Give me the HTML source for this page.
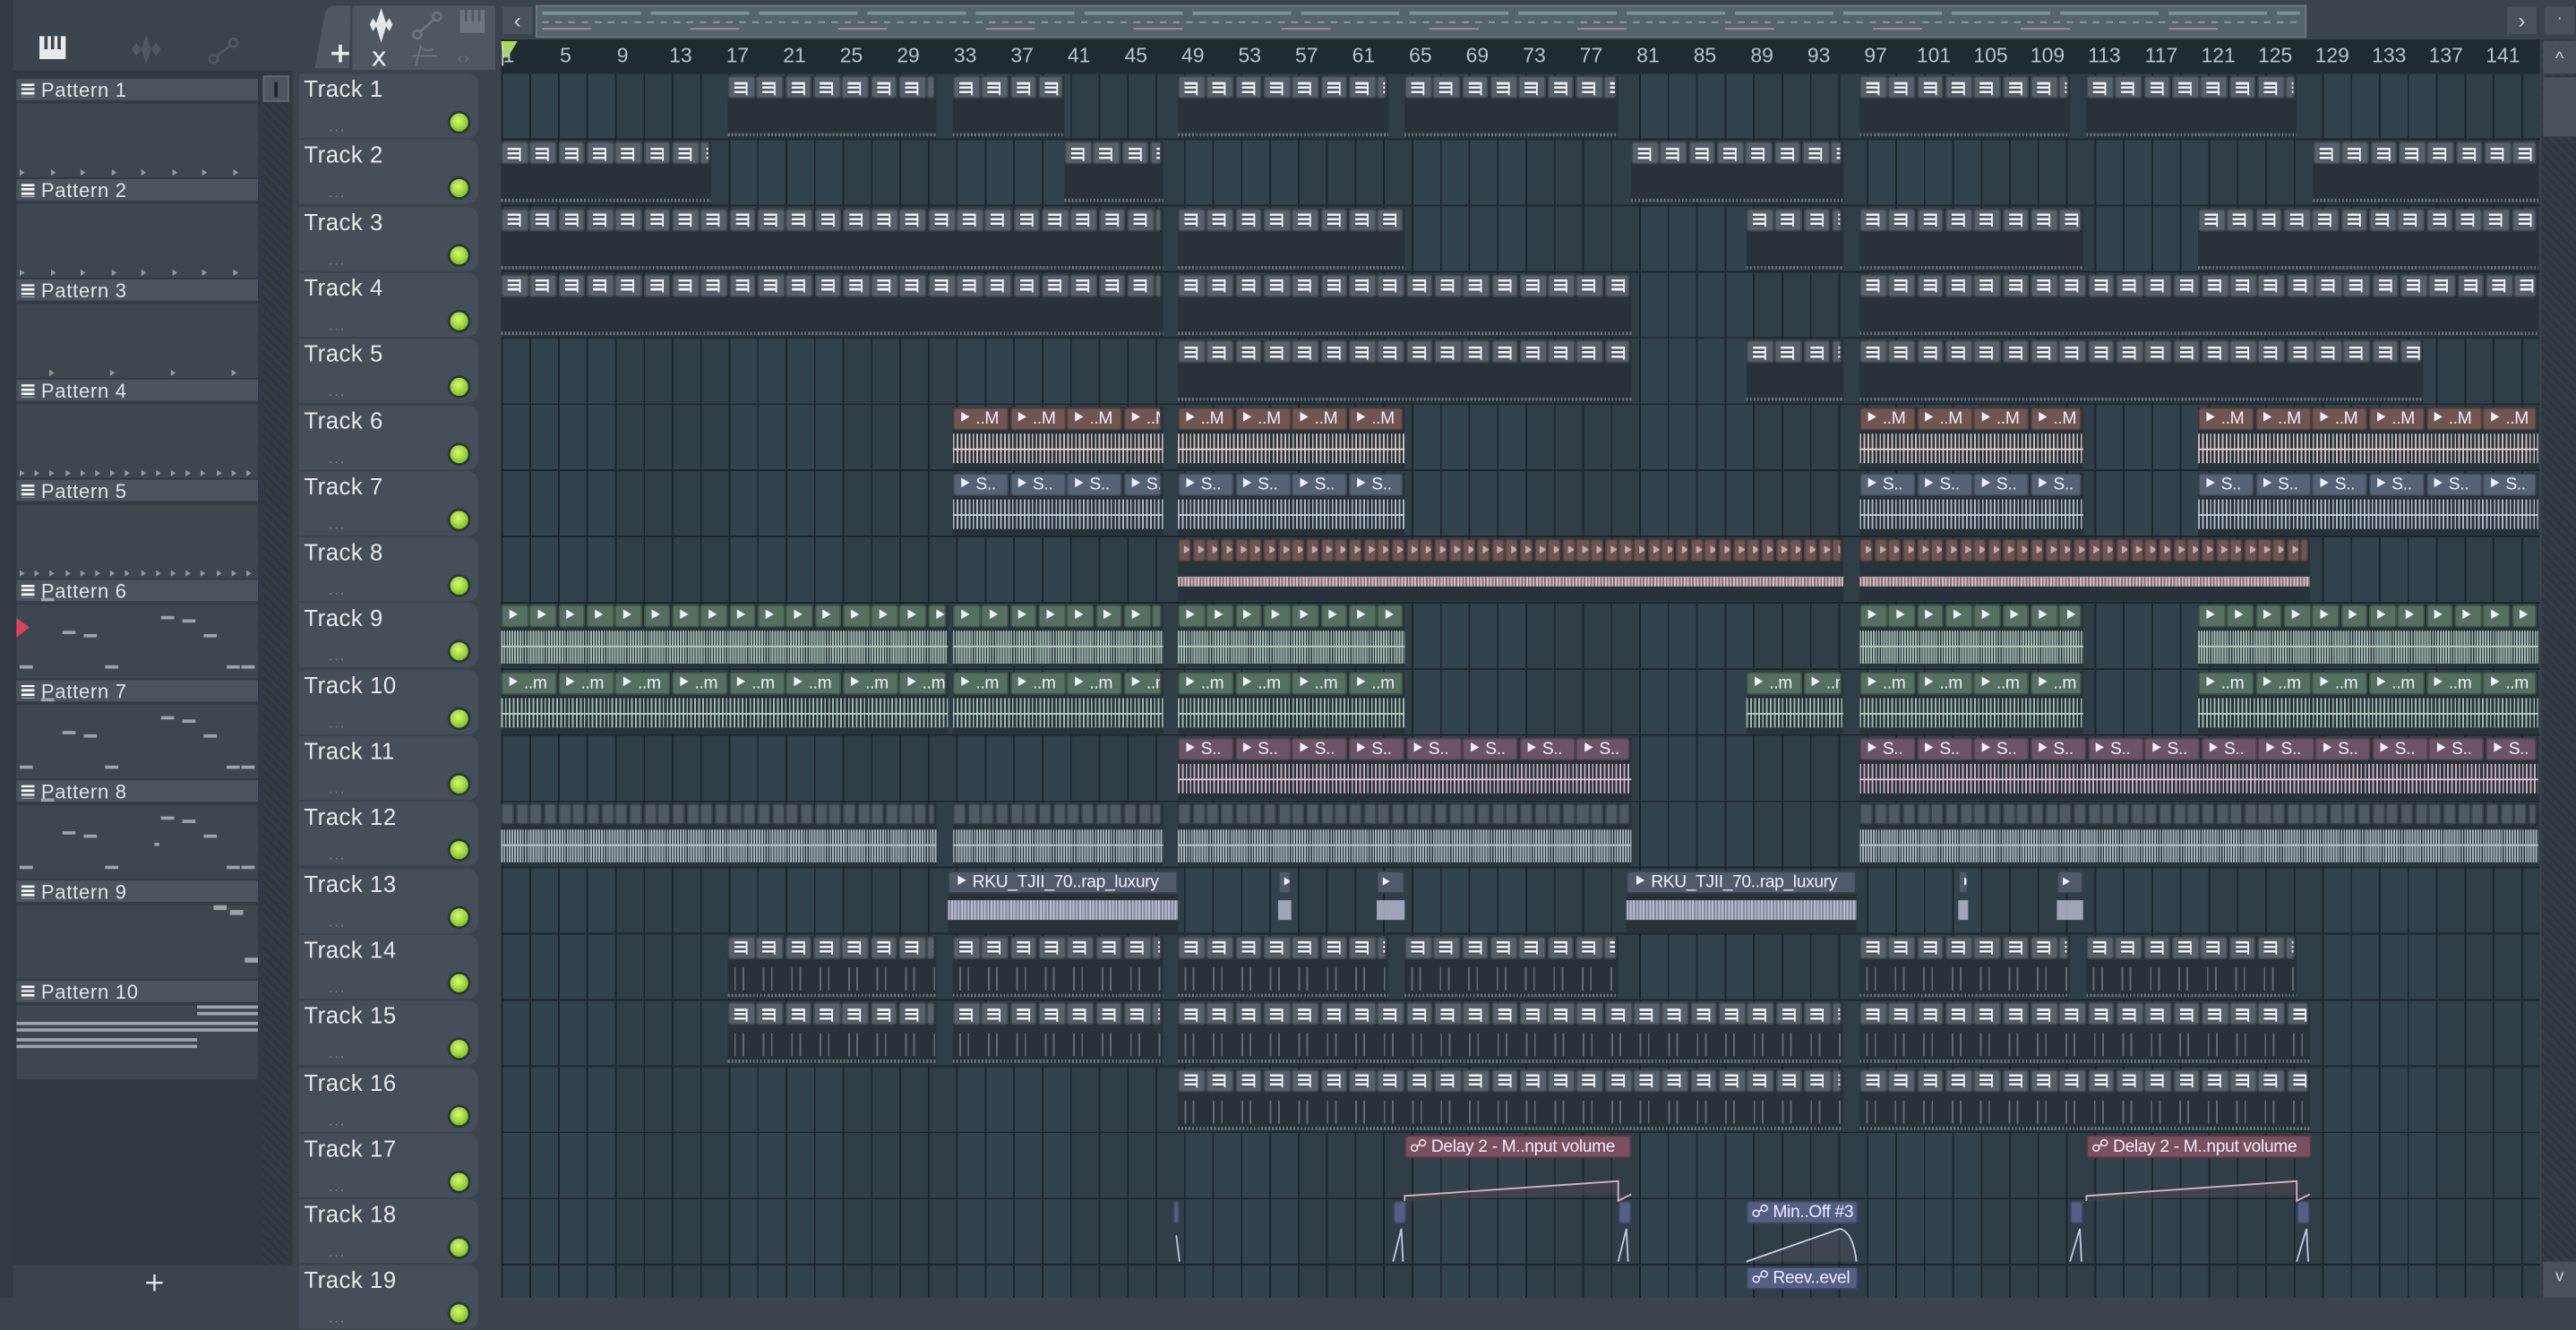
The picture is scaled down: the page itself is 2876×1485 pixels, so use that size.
<!DOCTYPE html>
<html><head><meta charset="utf-8">
<style>
html,body{margin:0;padding:0;width:2876px;height:1448px;overflow:hidden;background:#3a444d;}
#s{position:absolute;left:0;top:0;width:1568px;height:790px;transform:scale(1.83418);transform-origin:0 0;font-family:"Liberation Sans Narrow","Liberation Sans",sans-serif;color:#dfe5e8;}
.a{position:absolute;box-sizing:border-box;}
.grid{left:305px;top:45px;width:1241px;height:745px;background-color:#33434d;
background-image:repeating-linear-gradient(90deg,#1c262d 0 1px,transparent 1px 17.32px),repeating-linear-gradient(180deg,transparent 0 39.3px,#1c262d 39.3px 40.3px),repeating-linear-gradient(90deg,rgba(0,0,0,0) 0 69.3px,rgba(0,0,0,.08) 69.3px 138.6px);}
.th{left:182px;width:109px;height:39px;background:#454f59;border-radius:0 6px 6px 0;}
.th b{position:absolute;left:3px;top:1px;font-weight:normal;font-size:14px;color:#e3e8eb;letter-spacing:.3px}
.th i{position:absolute;left:18px;top:27px;font-style:normal;font-size:9px;color:#7c868e;letter-spacing:1px}
.th u{position:absolute;left:92px;top:24px;width:11px;height:11px;border-radius:50%;background:radial-gradient(circle at 45% 40%,#d8f77a,#8fcf2a 60%,#5e8c1a);box-shadow:0 0 0 1.5px #2b353d;}
.ph{left:10px;width:147px;height:14px;background:#4a555f;border-bottom:1px solid #333d45;font-size:12px;padding-left:15px;line-height:14px;color:#dfe5e8;letter-spacing:.4px}
.ph:before{content:"";position:absolute;left:3px;top:3px;width:8px;height:8px;background:repeating-linear-gradient(180deg,#fff 0 1.3px,#5a6570 1.3px 2.6px);}
.pb{left:10px;width:147px;height:45px;background:#3d4750;}
.n{position:absolute;height:2.2px;background:#9aa4ab}
.rl{position:absolute;top:27px;font-size:12.5px;color:#b7c2c9;transform:translateX(-40%);}
.hd{position:absolute;height:14px;border-radius:2px;box-sizing:border-box;border:1px solid rgba(0,0,0,.25);overflow:hidden;white-space:nowrap;font-size:11.5px;line-height:13px;color:#eef;}
.lb{font-size:10.5px;letter-spacing:-0.2px}
.pi{position:absolute;left:3px;top:2.5px;width:7px;height:8px;background:repeating-linear-gradient(180deg,#f2f5f7 0 1.4px,#4b5660 1.4px 2.7px);border-right:1.5px solid #f2f5f7}
.bd{position:absolute;background:#27323a}
.wv{position:absolute;}
</style></head><body>
<div id="s">
<div class="a" style="left:0;top:0;width:180px;height:790px;background:#3a444d"></div>
<div class="a" style="left:0;top:0;width:8px;height:790px;background:#333c44"></div>
<div class="a" style="left:8px;top:43px;width:170px;height:727px;background:#313a42"></div>
<div class="a" style="left:160px;top:45px;width:16px;height:725px;background:repeating-linear-gradient(45deg,#2f383f 0 2px,#353e46 2px 4px)"></div>
<div class="a" style="left:160px;top:46px;width:16px;height:16px;background:#4c5760;border:1px solid #5f6a73"><div class="a" style="left:6px;top:3px;width:2px;height:9px;background:#1d252b"></div></div>
<div class="a" style="left:10px;top:772px;width:168px;height:18px;color:#dfe5e8;font-size:16px;text-align:center;line-height:18px;font-family:'DejaVu Sans',sans-serif">+</div>
<div class="a" style="left:24px;top:22px;width:16px;height:14px;background:#e6eaec"><div class="a" style="left:3px;top:0;width:2px;height:8px;background:#3a444d"></div><div class="a" style="left:7px;top:0;width:2px;height:8px;background:#3a444d"></div><div class="a" style="left:11px;top:0;width:2px;height:8px;background:#3a444d"></div></div>
<svg class="a" style="left:74px;top:20px" width="30" height="20"><path d="M0 10 L6 10 L9 6 L12 10 L15 1 L18 10 L21 6 L24 10 L30 10 L24 10 L21 14 L18 10 L15 19 L12 10 L9 14 L6 10Z" fill="#4e5962"/></svg>
<svg class="a" style="left:126px;top:22px" width="20" height="18"><circle cx="4" cy="14" r="2.5" fill="none" stroke="#4e5962" stroke-width="1.5"/><circle cx="16" cy="4" r="2.5" fill="none" stroke="#4e5962" stroke-width="1.5"/><path d="M6 12 L14 6" stroke="#4e5962" stroke-width="1.5"/></svg>

<svg class="a" style="left:190px;top:2px" width="115" height="42"><path d="M24 1 L14 1 Q8 1 7 8 L1 40 L23 40Z" fill="#4d5861" stroke="#3b454d"/><rect x="24" y="1" width="88" height="40" fill="#4d5861" stroke="#3b454d"/>
<text x="10" y="36" fill="#e6eaec" font-size="17" font-family="DejaVu Sans" font-weight="bold">+</text>
<path d="M30 13 L35 13 L37 9 L39 12 L42 3 L45 12 L47 9 L49 13 L54 13 L49 13 L47 17 L45 14 L42 24 L39 14 L37 17 L35 13Z" fill="#e1e6e9"/>
<circle cx="64" cy="19" r="2.5" fill="none" stroke="#6c767e" stroke-width="1.5"/><circle cx="76" cy="8" r="2.5" fill="none" stroke="#6c767e" stroke-width="1.5"/><path d="M66 17 L74 10" stroke="#6c767e" stroke-width="1.5"/>
<rect x="90" y="4" width="15" height="14" fill="#6c767e"/><rect x="93" y="4" width="1.5" height="7" fill="#4d5861"/><rect x="97" y="4" width="1.5" height="7" fill="#4d5861"/><rect x="101" y="4" width="1.5" height="7" fill="#4d5861"/>
<text x="36" y="38" fill="#e6eaec" font-size="16" font-family="DejaVu Sans">x</text>
<path d="M63 38 L66 26 Q68 30 74 28 M61 32 L76 32" stroke="#6c767e" fill="none"/>
<text x="88" y="37" fill="#6c767e" font-size="10" font-family="DejaVu Sans">‹›</text></svg>
<div class="a" style="left:305px;top:3px;width:20px;height:19px;background:#47525b;border:1px solid #39434b;color:#cdd4d8;font-size:13px;text-align:center;line-height:17px">‹</div>
<div class="a" style="left:326px;top:3px;width:1078px;height:20px;background:#55646d;border:1px solid #6a7880"></div>
<div class="a" style="left:330px;top:7px;width:1070px;height:2px;background:repeating-linear-gradient(90deg,#7d9593 0 60px,transparent 60px 66px)"></div>
<div class="a" style="left:330px;top:13px;width:1070px;height:1px;background:repeating-linear-gradient(90deg,#8aa0a0 0 4px,transparent 4px 8px)"></div>
<div class="a" style="left:330px;top:17px;width:1070px;height:1px;background:repeating-linear-gradient(90deg,#a48a98 0 30px,transparent 30px 90px)"></div>
<div class="a" style="left:1525px;top:3px;width:20px;height:19px;background:#47525b;border:1px solid #39434b;color:#cdd4d8;font-size:13px;text-align:center;line-height:17px">›</div>
<div class="a" style="left:1548px;top:3px;width:20px;height:19px;background:#47525b;border:1px solid #39434b;color:#cdd4d8;font-size:10px;text-align:center;line-height:16px">·</div>
<div class="a" style="left:305px;top:24px;width:1241px;height:21px;background:#1f2b33"></div>
<svg class="a" style="left:304px;top:25px" width="12" height="16"><path d="M1 0 L11 0 L5 10 L2 10Z" fill="#a8dc4e"/><path d="M2 0 L2 15" stroke="#c8d0d5"/></svg>
<div class="a" style="left:1547px;top:24px;width:21px;height:766px;background:repeating-linear-gradient(45deg,#2f383f 0 2px,#353e46 2px 4px)"></div>
<div class="a" style="left:1548px;top:25px;width:20px;height:20px;background:#47525b;color:#cdd4d8;font-size:11px;text-align:center;line-height:22px">^</div>
<div class="a" style="left:1548px;top:47px;width:20px;height:36px;background:#48535c"></div>
<div class="a" style="left:1548px;top:768px;width:20px;height:22px;background:#47525b;color:#cdd4d8;font-size:10px;text-align:center;line-height:20px">v</div>

<div class="a grid"></div>

<div class="hd lb" style="left:577px;top:530px;width:140px;background:#4f5b6a;padding-left:3px">⯈ RKU_TJII_70..rap_luxury</div>
<div class="hd lb" style="left:990px;top:530px;width:140px;background:#4f5b6a;padding-left:3px">⯈ RKU_TJII_70..rap_luxury</div>
<div class="hd lb" style="left:855px;top:691px;width:138px;background:#7a4f5e;padding-left:2px">☍ Delay 2 - M..nput volume</div>
<div class="hd lb" style="left:1270px;top:691px;width:137px;background:#7a4f5e;padding-left:2px">☍ Delay 2 - M..nput volume</div>
<div class="hd lb" style="left:1063px;top:731px;width:68px;background:#555f86;padding-left:2px">☍ Min..Off #3</div>
<div class="hd lb" style="left:1063px;top:771px;width:68px;background:#555f86;padding-left:2px">☍ Reev..evel</div>
<svg class="a" style="left:0;top:0" width="1568" height="790">
<path d="M855 731 L855 728 L985 719 L985 731 L993 727" stroke="#d9b2c4" fill="rgba(80,70,80,.5)"/>
<path d="M1270 731 L1270 728 L1398 719 L1398 731 L1406 727" stroke="#d9b2c4" fill="rgba(80,70,80,.5)"/>
<path d="M1063 768 L1120 748 Q1128 750 1130 768" stroke="#c9d0e6" fill="rgba(80,85,100,.4)"/>
<path d="M848 768 L853 748 L854 768 M985 768 L990 748 L991 768 M1260 768 L1266 748 L1267 768 M1398 768 L1404 748 L1405 768 M716 752 L718 768" stroke="#c0c8e0" fill="none"/>
</svg>
</div>
<script>
(function(){
var S=document.getElementById('s');
function el(h){S.insertAdjacentHTML('beforeend',h);}
var BX=306,BW=8.66;
var r='';for(var n=1;n<=141;n+=4){r+='<div class="rl" style="left:'+(BX+(n-1)*BW+3)+'px">'+n+'</div>';}
el(r);
var t='';for(var i=1;i<=19;i++){var y=45+(i-1)*40.3;t+='<div class="a th" style="top:'+y+'px"><b>Track '+i+'</b><i>...</i><u></u></div>';}
el(t);
var p='';
for(var k=0;k<10;k++){var y=48+61*k;p+='<div class="a ph" style="top:'+y+'px">Pattern '+(k+1)+'</div><div class="a pb" style="top:'+(y+15)+'px"></div>';
 if(k<5){var cnt=(k==3||k==4)?16:8;if(k==2)cnt=4;for(var j=0;j<cnt;j++){var xx=(k==2)?30+j*37:12+j*(k>=3?9.2:18.5);p+='<div class="a" style="left:'+xx+'px;top:'+(y+55)+'px;width:0;height:0;border-left:3px solid #8f999f;border-top:2px solid transparent;border-bottom:2px solid transparent"></div>';}}
 if(k>=5&&k<=7){
  var L=[[12,62,8],[25,21,8],[38,41,8],[51,43,8],[64,62,8],[98,32,8],[111,34,8],[124,43,8],[138,62,8],[147,62,8]];
  for(var q=0;q<L.length;q++)p+='<div class="n" style="left:'+L[q][0]+'px;top:'+(y+L[q][1]-10)+'px;width:'+L[q][2]+'px"></div>';
  if(k==7)p+='<div class="n" style="left:94px;top:'+(y+38)+'px;width:3px"></div>';}
 if(k==8){p+='<div class="n" style="left:130px;top:'+(y+15)+'px;width:8px;height:3px"></div><div class="n" style="left:140px;top:'+(y+18)+'px;width:8px;height:3px"></div><div class="n" style="left:149px;top:'+(y+47)+'px;width:8px;height:3px"></div>';}
 if(k==9){[[120,15,37],[120,19,37],[10,25,147],[10,29,147],[10,35,110],[10,39,110]].forEach(function(a){p+='<div class="n" style="left:'+a[0]+'px;top:'+(y+a[1])+'px;width:'+a[2]+'px;height:1.5px"></div>';});}
}
el(p);
el('<div class="a" style="left:10px;top:376px;width:0;height:0;border-left:8px solid #e0405a;border-top:6px solid transparent;border-bottom:6px solid transparent"></div>');
var c='';
var Q={
pat:{hc:'#56616b',st:17.32,w:'pat'},
m:{hc:'#705550',st:34.64,lab:'⯈ ..M',wc:'#e8d4d0',dense:2},
s:{hc:'#566275',st:34.64,lab:'⯈ S..',wc:'#c4cfdd',dense:3},
t8:{hc:'#6f5654',st:8.66,lab:'',wc:'#d8b8b8',thin:1},
g:{hc:'#56705f',st:17.32,lab:'⯈',wc:'#b8d0c2',dense:1},
gm:{hc:'#55705e',st:34.64,lab:'⯈ ..m',wc:'#b8d0c2',dense:3},
p:{hc:'#6c5468',st:34.64,lab:'⯈ S..',wc:'#e3c0d0',dense:2},
w:{hc:'#4e5a64',st:8.66,lab:'',wc:'#b9c7cf',dense:1,sm:1}
};
var rows={
1:[['pat',443,570],['pat',580,648],['pat',717,845],['pat',855,985],['pat',1132,1260],['pat',1270,1398]],
2:[['pat',305,433],['pat',648,708],['pat',993,1122],['pat',1408,1545]],
3:[['pat',305,708],['pat',717,855],['pat',1063,1122],['pat',1132,1268],['pat',1338,1545]],
4:[['pat',305,708],['pat',717,993],['pat',1132,1545]],
5:[['pat',717,993],['pat',1063,1122],['pat',1132,1475]],
6:[['m',580,708],['m',717,855],['m',1132,1268],['m',1338,1545]],
7:[['s',580,708],['s',717,855],['s',1132,1268],['s',1338,1545]],
8:[['t8',717,1122],['t8',1132,1406]],
9:[['g',305,577],['g',580,708],['g',717,855],['g',1132,1268],['g',1338,1545]],
10:[['gm',305,577],['gm',580,708],['gm',717,855],['gm',1063,1122],['gm',1132,1268],['gm',1338,1545]],
11:[['p',717,993],['p',1132,1545]],
12:[['w',305,570],['w',580,708],['w',717,993],['w',1132,1545]],
14:[['pat',443,570],['pat',580,708],['pat',717,845],['pat',855,985],['pat',1132,1260],['pat',1270,1398]],
15:[['pat',443,570],['pat',580,708],['pat',717,1122],['pat',1132,1406]],
16:[['pat',717,1122],['pat',1132,1406]]
};
for(var ri in rows){(function(ri){var ty=45+(ri-1)*40.3;rows[ri].forEach(function(a){var q=Q[a[0]],x0=a[1],x1=a[2];
 c+='<div class="bd" style="left:'+x0+'px;top:'+(ty+1)+'px;width:'+(x1-x0)+'px;height:38px"></div>';
 for(var x=x0;x<x1-2;x+=q.st){var w=Math.min(q.st,x1-x)-0.6;
  var inner=q.w=='pat'?'<span class="pi"></span>':('<span class="lb" style="padding-left:2px">'+(w>20?q.lab:(q.lab?'⯈':''))+'</span>');
  if(a[0]=='t8')inner='<span style="padding-left:1px;color:#c9a8a8;font-size:9px">⯈</span>';
  c+='<div class="hd" style="left:'+x+'px;top:'+(ty+1)+'px;width:'+w+'px;background:'+q.hc+(q.sm?';height:13px':'')+'">'+inner+'</div>';}
 if(q.w=='pat'){c+='<div class="wv" style="left:'+x0+'px;top:'+(ty+36)+'px;width:'+(x1-x0)+'px;height:2px;background:repeating-linear-gradient(90deg,#6f7b84 0 1px,transparent 1px 2.2px)"></div>';
   if(ri>=14)c+='<div class="wv" style="left:'+x0+'px;top:'+(ty+20)+'px;width:'+(x1-x0)+'px;height:14px;background:repeating-linear-gradient(90deg,transparent 0 4px,#8a959c 4px 5px,transparent 5px 9px,#8a959c 9px 10px,transparent 10px 17.32px);opacity:.6"></div>';}
 else if(q.thin){c+='<div class="wv" style="left:'+x0+'px;top:'+(ty+24)+'px;width:'+(x1-x0)+'px;height:6px;background:repeating-linear-gradient(90deg,'+q.wc+' 0 1px,rgba(216,184,184,.5) 1px 2px)"></div>';}
 else{var hh=q.dense==1?20:18;c+='<div class="wv" style="left:'+x0+'px;top:'+(ty+17)+'px;width:'+(x1-x0)+'px;height:'+hh+'px;background:repeating-linear-gradient(90deg,'+q.wc+' 0 1px,transparent 1px '+(q.dense==1?1.6:2.4)+'px);opacity:.85"></div><div class="wv" style="left:'+x0+'px;top:'+(ty+26)+'px;width:'+(x1-x0)+'px;height:1px;background:'+q.wc+'"></div>';}
});})(ri);}
var t13=45+12*40.3;
[[577,717],[990,1130]].forEach(function(a){c+='<div class="bd" style="left:'+a[0]+'px;top:'+(t13+15)+'px;width:'+(a[1]-a[0])+'px;height:24px"></div><div class="wv" style="left:'+a[0]+'px;top:'+(t13+19)+'px;width:'+(a[1]-a[0])+'px;height:12px;background:repeating-linear-gradient(90deg,#b9bfd2 0 1px,rgba(185,191,210,.6) 1px 2px)"></div>';});
[[778,786],[838,855],[1192,1198],[1252,1268]].forEach(function(a){c+='<div class="hd" style="left:'+a[0]+'px;top:'+(t13+1)+'px;width:'+(a[1]-a[0])+'px;background:#4f5b6a;font-size:9px;padding-left:1px">⯈</div><div class="wv" style="left:'+a[0]+'px;top:'+(t13+19)+'px;width:'+(a[1]-a[0])+'px;height:12px;background:#b9bfd2;opacity:.8"></div>';});
var t18=45+17*40.3;
[[714,718],[848,856],[985,993],[1260,1268],[1398,1406]].forEach(function(a){c+='<div class="hd" style="left:'+a[0]+'px;top:'+(t18+1)+'px;width:'+(a[1]-a[0])+'px;background:#555f86"></div>';});
var g=document.querySelector('.grid');g.insertAdjacentHTML('afterend',c);
})();
</script>
</body></html>
